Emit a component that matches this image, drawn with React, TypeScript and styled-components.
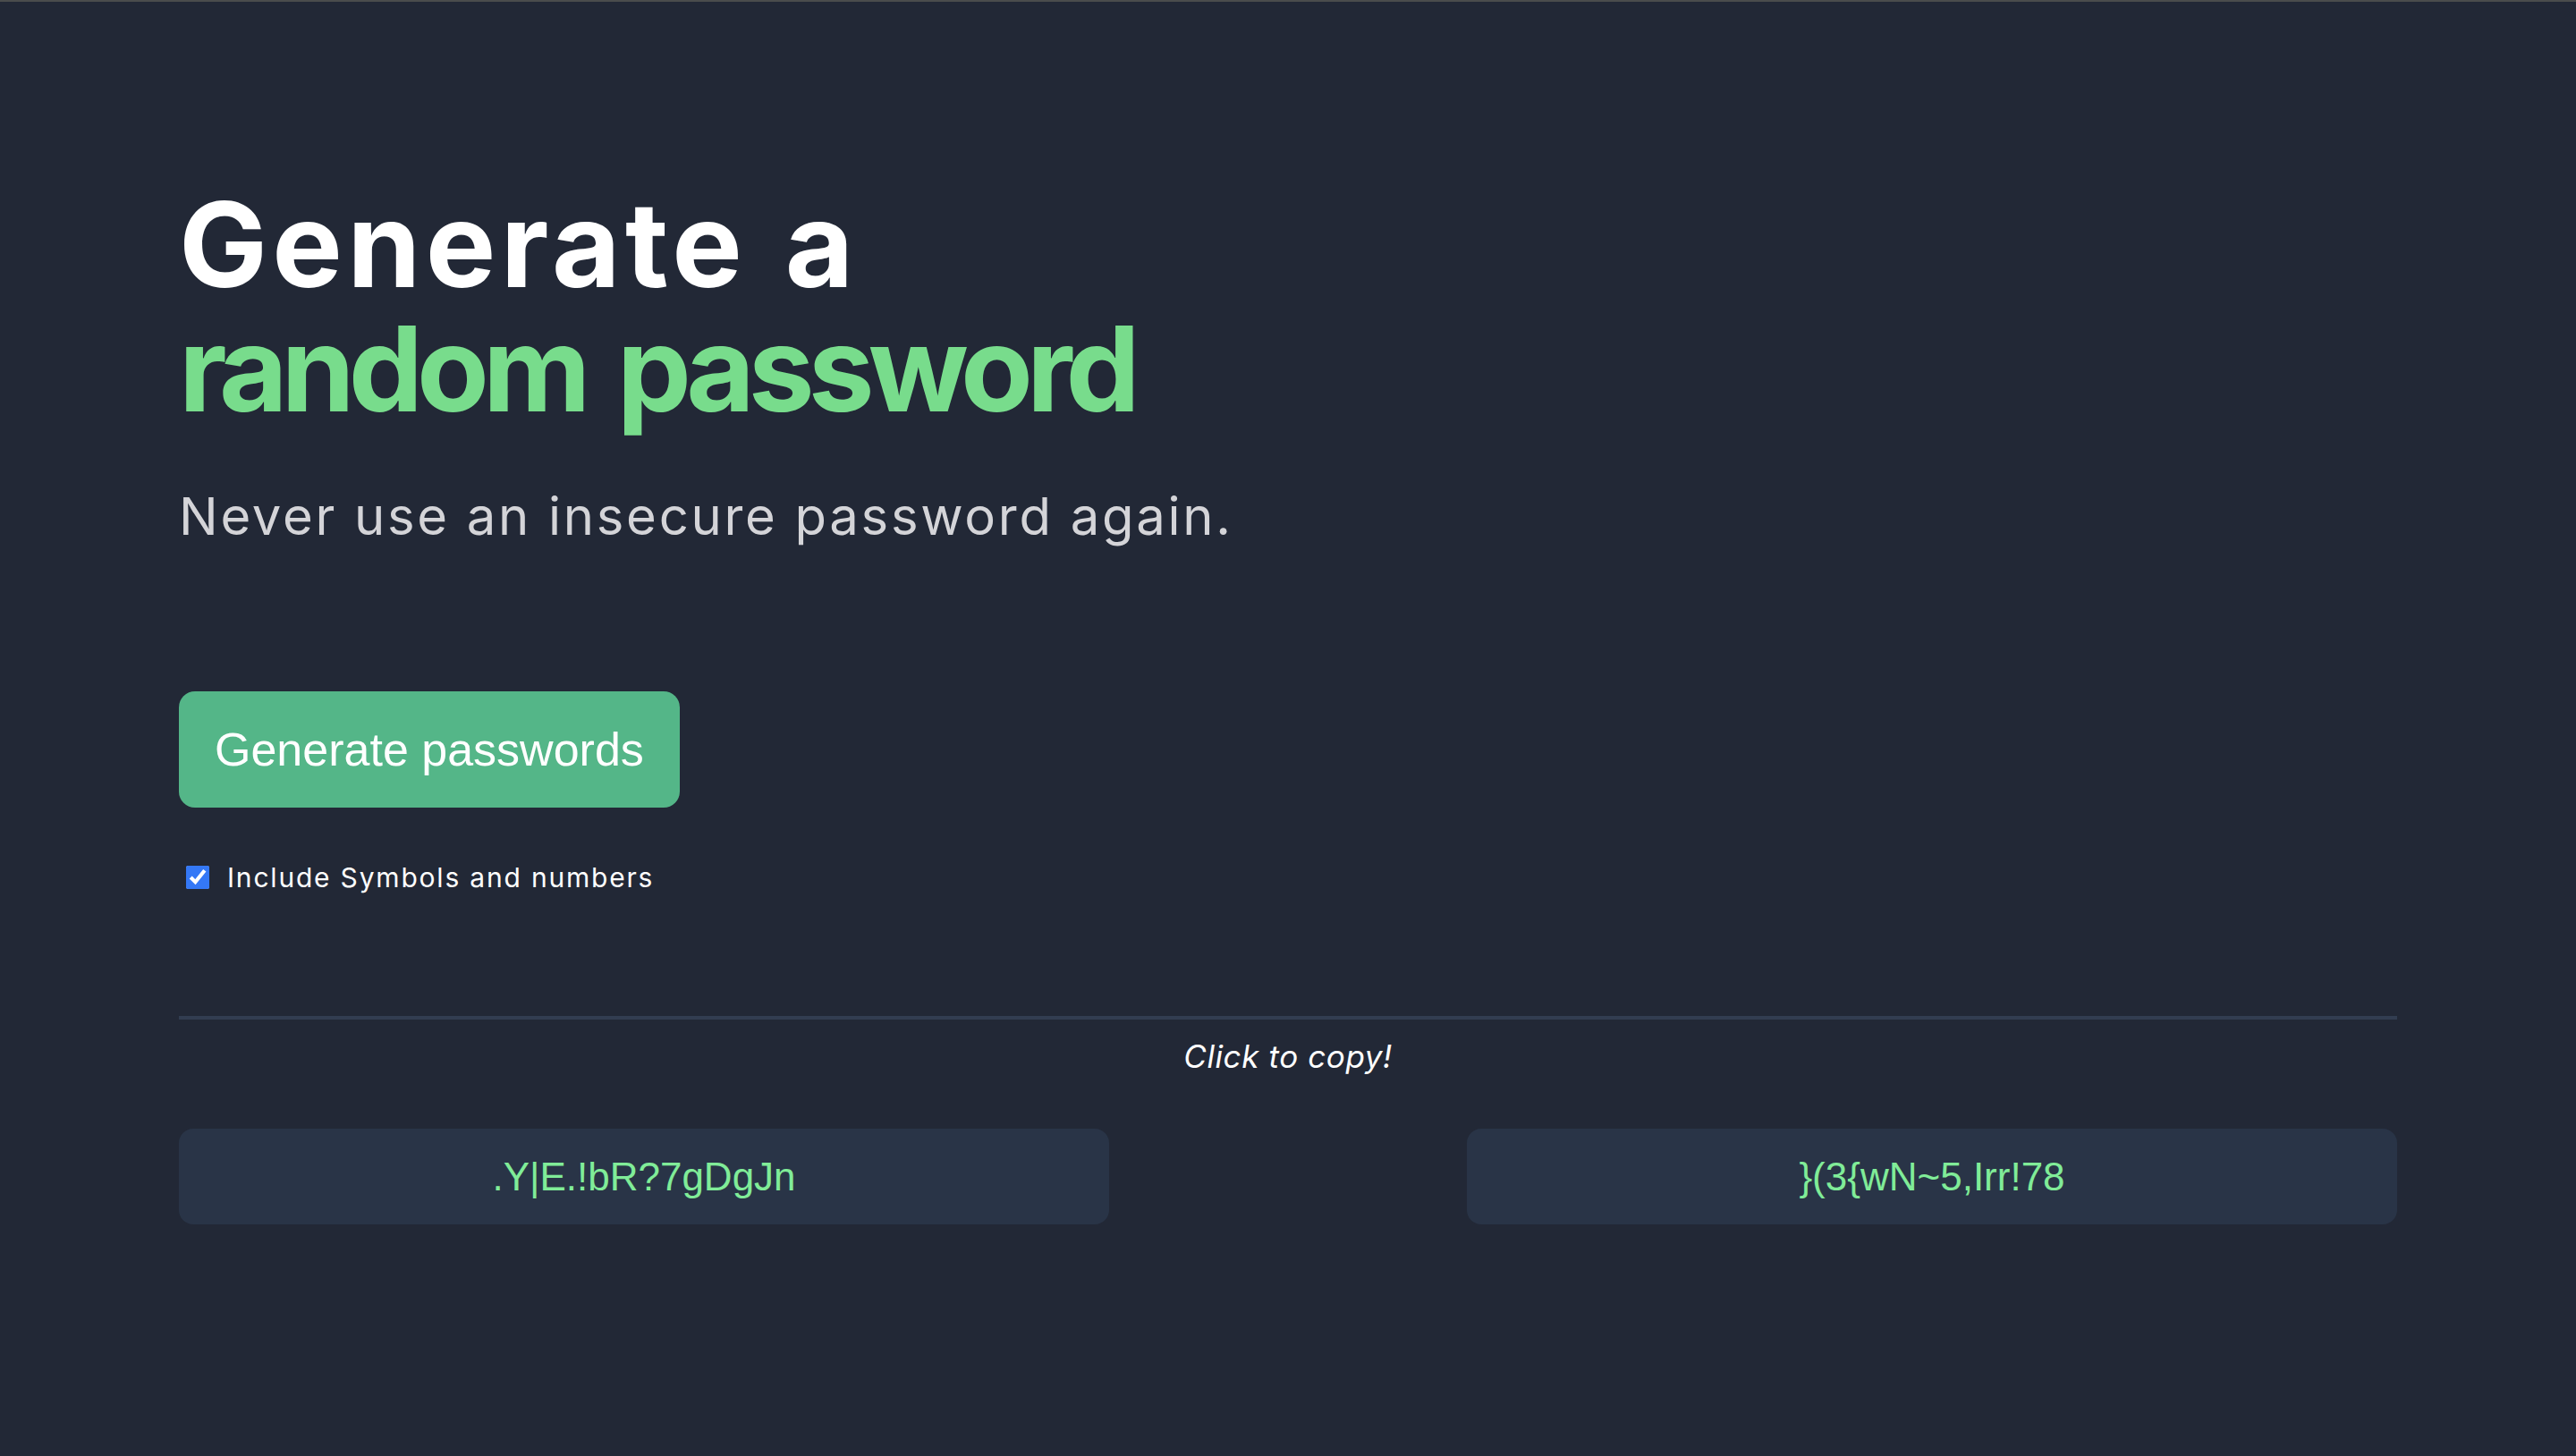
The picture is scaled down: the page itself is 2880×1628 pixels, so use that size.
import React, { useState } from "react";
import styled, { createGlobalStyle } from "styled-components";

const GlobalStyle = createGlobalStyle`
  html, body {
    margin: 0;
    padding: 0;
    background: #222836;
  }
  body {
    border-top: 2px solid #4a4c4c;
    min-height: 1626px;
    font-family: Inter, "Noto Sans", sans-serif;
  }
`;

const Page = styled.main`
  display: flex;
  flex-direction: column;
  padding: 0 200px;
  min-height: 1626px;
  box-sizing: border-box;
`;

const Title = styled.h1`
  margin: 202px 0 0;
  font-family: Inter, "Noto Sans", sans-serif;
  font-weight: 750;
  font-size: 132px;
  line-height: 139px;
  color: #ffffff;
`;

const TitleLine = styled.span<{
  $accent?: boolean;
  $spacing: number;
  $wordSpacing: number;
}>`
  display: block;
  white-space: nowrap;
  letter-spacing: ${(p) => p.$spacing}px;
  word-spacing: ${(p) => p.$wordSpacing}px;
  color: ${(p) => (p.$accent ? "#78dc8c" : "#ffffff")};
`;

const Subtitle = styled.p`
  margin: 60px 0 0;
  font-family: Inter, "Noto Sans", sans-serif;
  font-weight: 400;
  font-size: 58px;
  line-height: 70px;
  letter-spacing: 2.7px;
  color: #d4d4d8;
`;

const GenerateButton = styled.button`
  align-self: flex-start;
  margin-top: 161px;
  height: 130px;
  padding: 0 40px;
  border: none;
  border-radius: 18px;
  background: #54b688;
  color: #ffffff;
  font-family: "Liberation Sans", Arial, sans-serif;
  font-size: 52px;
  cursor: pointer;
`;

const OptionRow = styled.label`
  display: flex;
  align-items: center;
  gap: 20px;
  margin-top: 60px;
  padding-left: 8px;
  font-family: Inter, "Noto Sans", sans-serif;
  font-size: 30px;
  letter-spacing: 1.8px;
  color: #ffffff;
`;

const Check = styled.input`
  width: 26px;
  height: 26px;
  margin: 0;
  accent-color: #3478f6;
`;

const Divider = styled.hr`
  width: 100%;
  margin: 137px 0 0;
  border: none;
  height: 4px;
  background: #323d51;
`;

const Hint = styled.p`
  margin: 20px 0 0;
  text-align: center;
  font-family: Inter, "Noto Sans", sans-serif;
  font-style: italic;
  font-size: 35px;
  letter-spacing: 0.6px;
  color: #ffffff;
`;

const Results = styled.div`
  display: grid;
  grid-template-columns: 1040px 1040px;
  justify-content: space-between;
  margin-top: 60px;
`;

const PasswordBox = styled.button`
  height: 107px;
  border: none;
  border-radius: 16px;
  background: #293447;
  color: #80ec98;
  font-family: "Liberation Sans", Arial, sans-serif;
  font-size: 44px;
  cursor: pointer;
`;

export default function App() {
  const [checked, setChecked] = useState(true);
  const passwords = [".Y|E.!bR?7gDgJn", "}(3{wN~5,Irr!78"];
  return (
    <>
      <GlobalStyle />
      <Page>
        <Title>
          <TitleLine $spacing={5.3} $wordSpacing={6}>
            Generate a
          </TitleLine>
          <TitleLine $accent $spacing={-7} $wordSpacing={12}>
            random password
          </TitleLine>
        </Title>
        <Subtitle>Never use an insecure password again.</Subtitle>
        <GenerateButton>Generate passwords</GenerateButton>
        <OptionRow>
          <Check
            type="checkbox"
            checked={checked}
            onChange={() => setChecked(!checked)}
          />
          Include Symbols and numbers
        </OptionRow>
        <Divider />
        <Hint>Click to copy!</Hint>
        <Results>
          {passwords.map((p) => (
            <PasswordBox key={p}>{p}</PasswordBox>
          ))}
        </Results>
      </Page>
    </>
  );
}
